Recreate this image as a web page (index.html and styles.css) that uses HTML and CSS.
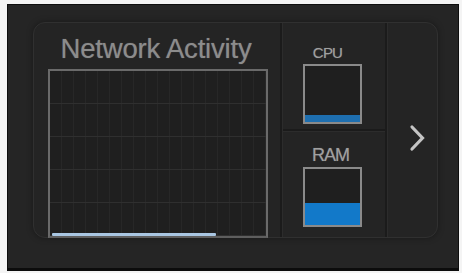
FILE: index.html
```html
<!DOCTYPE html>
<html>
<head>
<meta charset="utf-8">
<link rel="stylesheet" href="styles.css">
</head>
<body>
<div class="frame">
  <div class="panel">
    <div class="card">
      <section class="net">
        <h1 class="title">Network Activity</h1>
        <div class="graph">
          <div class="trace" style="width: 164px"></div>
        </div>
      </section>
      <div class="divider"></div>
      <section class="meters">
        <div class="meter meter-cpu">
          <div class="label label-cpu">CPU</div>
          <div class="gauge"><div class="fill" style="height: 7px"></div></div>
        </div>
        <div class="hdivider"></div>
        <div class="meter meter-ram">
          <div class="label label-ram">RAM</div>
          <div class="gauge"><div class="fill" style="height: 22px"></div></div>
        </div>
      </section>
      <div class="divider"></div>
      <section class="next">
        <svg class="chevron" width="18" height="28" viewBox="0 0 18 28">
          <path d="M4 3 L14.5 14 L4 25" fill="none" stroke="#c4c4c4" stroke-width="3.2" stroke-linecap="round" stroke-linejoin="miter"/>
        </svg>
      </section>
    </div>
  </div>
</div>
</body>
</html>
```

FILE: styles.css
```css
html, body {
  margin: 0;
  padding: 0;
  background: #f4f4f4;
  font-family: "Liberation Sans", Arial, sans-serif;
}
.frame {
  width: 462px;
  height: 273px;
  box-sizing: border-box;
  padding: 4px 3px 2px 7px;
}
.panel {
  width: 100%;
  height: 100%;
  box-sizing: border-box;
  background: #252525;
  border: 1px solid #0e0e0e;
  border-bottom: 3px solid #0c0c0c;
  padding: 17px 0 0 25px;
}
.card {
  width: 405px;
  height: 216px;
  box-sizing: border-box;
  border: 1px solid #303030;
  border-radius: 12px;
  background: #242424;
  display: flex;
  box-shadow: 0 0 6px rgba(0,0,0,0.35);
}
.net {
  width: 246px;
  box-sizing: border-box;
  padding: 11px 0 0 14px;
}
.title {
  margin: 0 0 5px 0;
  font-weight: normal;
  font-size: 27.5px;
  line-height: 30px;
  color: #8c8c8c;
  width: 220px;
  text-align: center;
  letter-spacing: -0.2px;
  text-shadow: 0 0 1px rgba(140,140,140,0.6);
  white-space: nowrap;
  text-indent: -4px;
}
.graph {
  position: relative;
  width: 220px;
  height: 169px;
  box-sizing: border-box;
  border: 2px solid #6a6a6a;
  border-bottom-color: #5e5e5e;
  background-color: #1f1f1f;
  background-image:
    repeating-linear-gradient(to bottom, transparent 0, transparent 32px, #2f2f2f 32px, #2f2f2f 33px),
    repeating-linear-gradient(to right, transparent 0, transparent 11px, #272727 11px, #272727 12px);
}
.trace {
  position: absolute;
  left: 2px;
  bottom: 0;
  height: 3px;
  background: #a9c6e2;
  border-radius: 1px;
}
.divider {
  width: 2px;
  background: #1b1b1b;
  border-right: 1px solid #2c2c2c;
}
.meters {
  width: 102px;
  display: flex;
  flex-direction: column;
}
.meter {
  flex: 1;
  display: flex;
  flex-direction: column;
  align-items: center;
  padding-right: 3px;
}
.hdivider {
  height: 2px;
  background: #1b1b1b;
  border-bottom: 1px solid #2c2c2c;
}
.label {
  color: #a0a0a0;
  line-height: 1;
  text-shadow: 0 0 1px rgba(160,160,160,0.5);
}
.label-cpu {
  font-size: 15px;
  letter-spacing: -0.8px;
  margin-top: 22px;
  margin-bottom: 4px;
  margin-right: 10px;
}
.label-ram {
  font-size: 18px;
  letter-spacing: -1px;
  margin-top: 14px;
  margin-bottom: 3px;
  margin-right: 4px;
}
.gauge {
  width: 59px;
  height: 60px;
  box-sizing: border-box;
  border: 2px solid #8a8a8a;
  background: #1f1f1f;
  display: flex;
  flex-direction: column;
  justify-content: flex-end;
}
.fill {
  background: #1279c9;
}
.meter-cpu .fill {
  background: #1e6fb0;
}
.next {
  flex: 1;
  display: flex;
  align-items: center;
  justify-content: center;
  padding: 16px 0 0 8px;
}
.chevron {
  display: block;
}
```
